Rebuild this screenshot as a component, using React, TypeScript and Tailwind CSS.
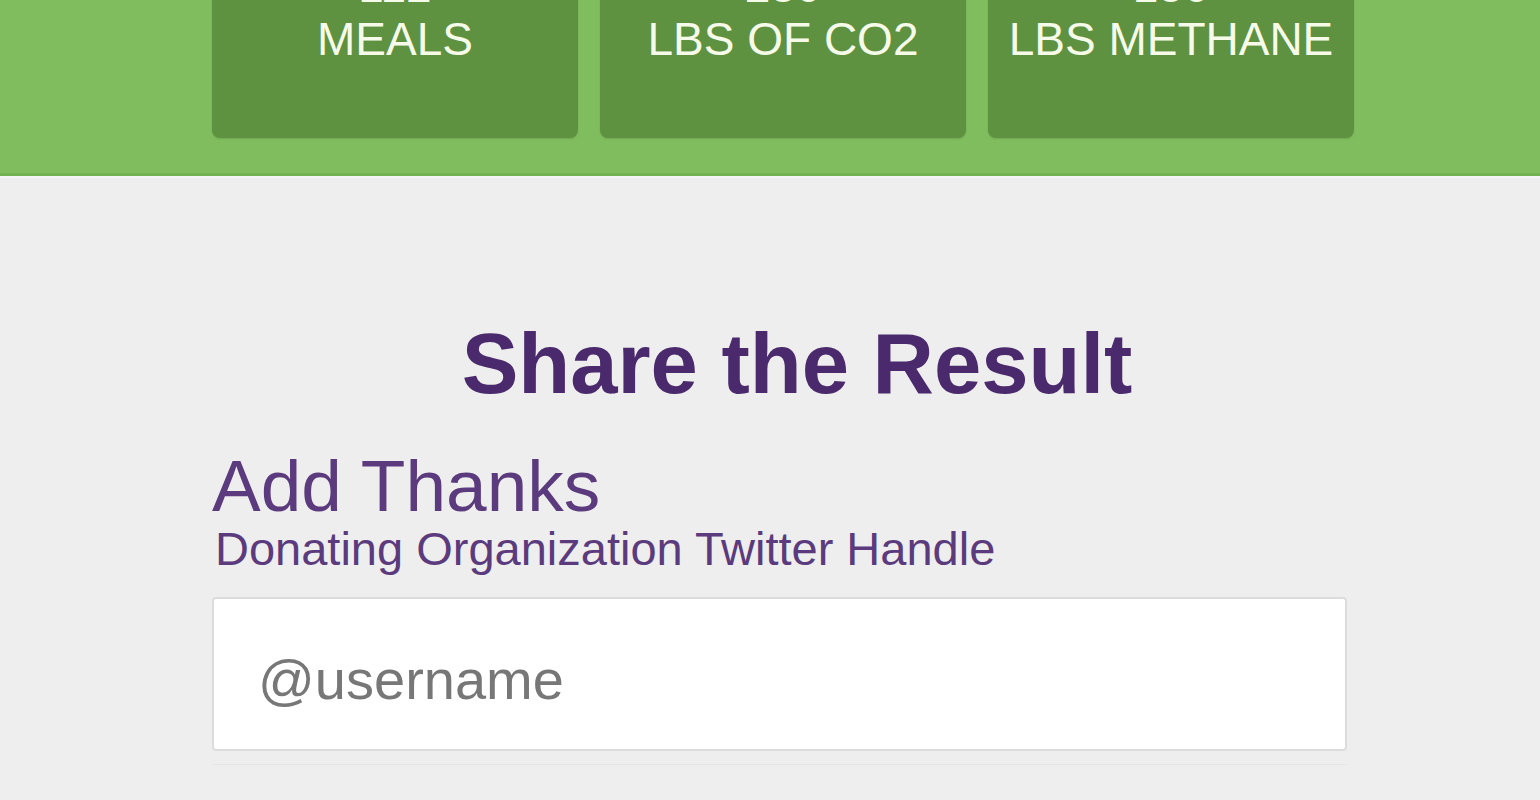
const stats = [
  { value: '112', label: 'MEALS' },
  { value: '230', label: 'LBS OF CO2' },
  { value: '150', label: 'LBS METHANE' },
];

export default function App() {
  return (
    <div className="w-[1540px] h-[800px] overflow-hidden bg-[#eeeeee] font-['Liberation_Sans',Arial,sans-serif]">
      {/* Results band */}
      <div className="h-[176px] bg-[#80bd5e] border-b-[3px] border-[#73b252] overflow-hidden">
        <div className="flex gap-[22px] pl-[212px]">
          {stats.map((s) => (
            <div
              key={s.label}
              className="w-[366px] h-[200px] -mt-[62px] rounded-[8px] bg-[#5e9140] shadow-[0_1px_2px_rgba(0,0,0,0.12)] flex flex-col items-center text-[#f6fbe9] text-[46px] leading-[55px] pt-[21px]"
            >
              <span className="-mb-[2px]">{s.value}</span>
              <span>{s.label}</span>
            </div>
          ))}
        </div>
      </div>
      <div className="h-[2px] bg-[#f4f4f8]" />

      {/* Share form */}
      <div className="flex flex-col pl-[212px] pt-[143px]">
        <h2 className="w-[1170px] text-center font-bold text-[85px] leading-[85px] text-[#4a2a6c]">
          Share the Result
        </h2>
        <div className="mt-[42px] text-[73px] leading-[76px] text-[#5b3b7d]">Add Thanks</div>
        <div className="text-[47px] leading-[50px] text-[#5b3b7d] pl-[3px]">
          Donating Organization Twitter Handle
        </div>
        <div className="mt-[23px] w-[1135px] h-[154px] bg-white border-[2px] border-[#dcdcdc] rounded-[4px] flex items-center pl-[44px] pt-[12px]">
          <span className="text-[56px] text-[#777777]">@username</span>
        </div>
        <div className="mt-[13px] w-[1135px] h-[1px] bg-[#e6e6e6]" />
      </div>
    </div>
  );
}
